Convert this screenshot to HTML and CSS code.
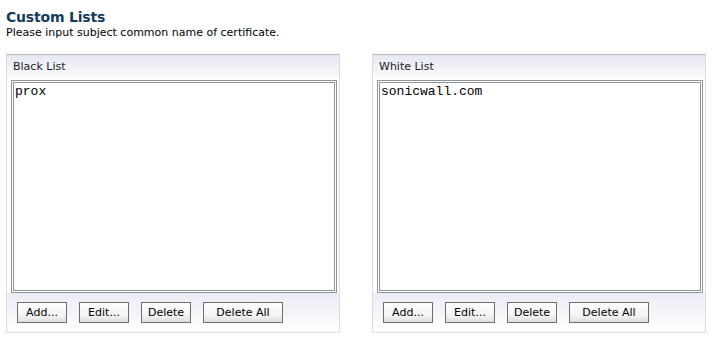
FILE: index.html
```html
<!DOCTYPE html>
<html>
<head>
    <title>Custom Lists</title>
    <link rel="stylesheet" href="styles.css">
</head>
<body>
<div class="page">
    <h1>Custom Lists</h1>
    <p class="hint">Please input subject common name of certificate.</p>

    <div class="lists">
        <div class="panel">
            <div class="panel-head">Black List</div>
            <div class="listbox">
                <div class="item">prox</div>
            </div>
            <div class="panel-foot">
                <button class="button">Add...</button>
                <button class="button">Edit...</button>
                <button class="button">Delete</button>
                <button class="button wide">Delete All</button>
            </div>
        </div>

        <div class="panel">
            <div class="panel-head">White List</div>
            <div class="listbox">
                <div class="item">sonicwall.com</div>
            </div>
            <div class="panel-foot">
                <button class="button">Add...</button>
                <button class="button">Edit...</button>
                <button class="button">Delete</button>
                <button class="button wide">Delete All</button>
            </div>
        </div>
    </div>
</div>
</body>
</html>
```

FILE: styles.css
```css
body {
    margin: 0;
    background-color: #ffffff;
    font-family: "DejaVu Sans", Verdana, sans-serif;
    color: #000000;
}

.page {
    padding: 8px 6px 0 6px;
}

h1 {
    margin: 0;
    font-size: 14px;
    line-height: 18px;
    font-weight: bold;
    letter-spacing: -0.2px;
    color: #143c5a;
}

.hint {
    margin: 0;
    font-size: 11px;
    line-height: 14px;
}

.lists {
    display: flex;
    gap: 32px;
    margin-top: 14px;
}

.panel {
    width: 332px;
    border: 1px solid #dcdcdc;
    border-top-color: #b8b8b8;
    background-color: #ffffff;
}

.panel-head {
    height: 23px;
    line-height: 23px;
    padding-left: 6px;
    font-size: 11px;
    color: #222222;
    background: linear-gradient(to bottom, #e6e8f3, #fbfbfd);
}

.listbox {
    margin: 2px 2px 0 4px;
    height: 207px;
    border: 3px double #8c959c;
    background-color: #ffffff;
}

.item {
    padding: 1px 0 0 1px;
    font-family: "Liberation Mono", "Courier New", monospace;
    font-size: 13px;
    line-height: 15px;
}

.panel-foot {
    display: flex;
    gap: 12px;
    padding: 9px 0 9px 10px;
    background: linear-gradient(to bottom, #eaecf6, #ffffff);
}

.button {
    width: 50px;
    height: 21px;
    padding: 0;
    font-family: "DejaVu Sans", Verdana, sans-serif;
    font-size: 11px;
    color: #000000;
    border: 1px solid #6e6e6e;
    border-radius: 0;
    background: linear-gradient(to bottom, #ffffff, #f2f2f2 70%, #dcdcdc);
}

.button.wide {
    width: 80px;
}
```
